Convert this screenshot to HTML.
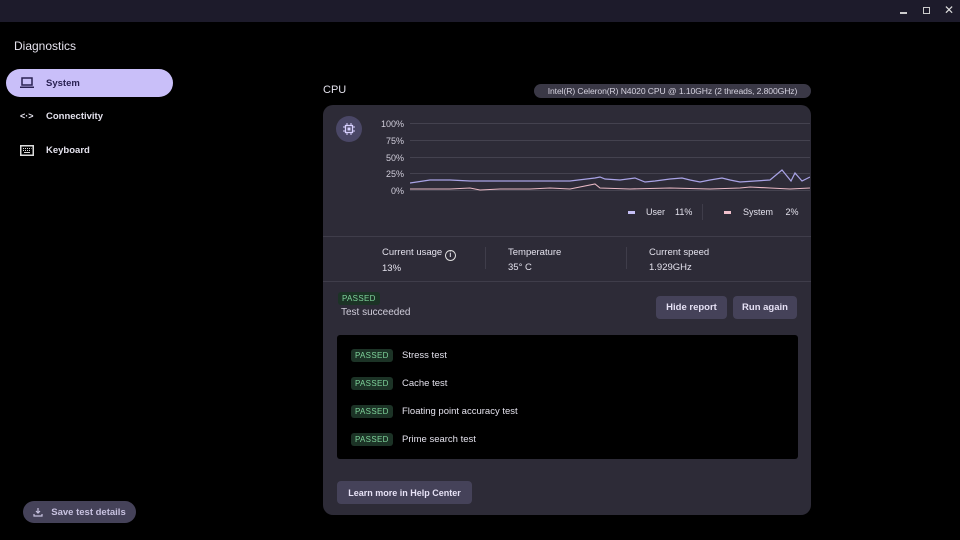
<!DOCTYPE html>
<html><head><style>
*{margin:0;padding:0;box-sizing:border-box}
body{width:960px;height:540px;background:#000;font-family:"Liberation Sans",sans-serif;color:#e3e1ec;position:relative;overflow:hidden;font-size:10px}
.a{position:absolute;white-space:nowrap}
.tb{left:0;top:0;width:960px;height:22px;background:#1d1b2b}
.nav{left:6px;width:167px;height:28px;border-radius:14px;display:flex;align-items:center;padding-left:14px;font-weight:bold;font-size:9.5px}
.nav svg{margin-right:12px}
.card{left:323px;top:105px;width:488px;height:410px;background:#2d2b37;border-radius:10px}
.btn{background:#454259;border-radius:4px;color:#e6e1f5;font-weight:bold;font-size:9.5px;display:flex;align-items:center;justify-content:center}
.pass{background:#1c3326;color:#7fd49b;font-size:8px;letter-spacing:.3px;padding:2px 4px;border-radius:3px}
.sep{background:#3f3d4a}
</style></head><body>
<div class="a tb"></div>
<div class="a" style="left:900px;top:12px;width:7px;height:2px;background:#ccc"></div>
<div class="a" style="left:923px;top:7px;width:7px;height:7px;border:1.5px solid #ccc"></div>
<div class="a" style="left:944px;top:3px;font-size:12px;color:#ddd">✕</div>
<div class="a" style="left:14px;top:39px;font-size:12px;color:#e6e3ee">Diagnostics</div>
<div class="a nav" style="top:69px;background:#c9bff9;color:#2a2253">
<svg width="14" height="12" viewBox="0 0 14 12"><rect x="2" y="1" width="10" height="7" fill="none" stroke="#2a2253" stroke-width="1.5"/><rect x="0" y="9.5" width="14" height="1.5" fill="#2a2253"/></svg>System</div>
<div class="a nav" style="top:102px;color:#e3e1ec">
<span style="width:14px;margin-right:12px;font-size:9px">&lt;·&gt;</span>Connectivity</div>
<div class="a nav" style="top:136px;color:#e3e1ec">
<svg width="14" height="11" viewBox="0 0 14 11"><rect x=".75" y=".75" width="12.5" height="9.5" fill="none" stroke="#ddd" stroke-width="1.5"/><path d="M3 3.5h1M5 3.5h1M7 3.5h1M9 3.5h1M11 3.5h0.5M3 5.5h1M5 5.5h1M7 5.5h1M9 5.5h1M4 7.5h6" stroke="#ddd" stroke-width="1"/></svg>Keyboard</div>
<div class="a btn" style="left:23px;top:501px;width:113px;height:22px;border-radius:11px;color:#c8c2e0">
<svg width="10" height="10" viewBox="0 0 10 10" style="margin-right:8px"><path d="M5 1v5M3 4l2 2 2-2M1 7v2h8V7" fill="none" stroke="#c8c2e0" stroke-width="1.2"/></svg>Save test details</div>

<div class="a" style="left:323px;top:84px;font-size:11px">CPU</div>
<div class="a" style="left:534px;top:84px;width:277px;height:14px;background:#3a3846;border-radius:7px;font-size:8.6px;color:#d6d3e0;text-align:center;line-height:14px;letter-spacing:-0.1px">Intel(R) Celeron(R) N4020 CPU @ 1.10GHz (2 threads, 2.800GHz)</div>
<div class="a card"></div>
<div class="a" style="left:336px;top:116px;width:26px;height:26px;border-radius:13px;background:#4a4766;display:flex;align-items:center;justify-content:center">
<svg width="12" height="12" viewBox="0 0 12 12"><rect x="2.5" y="2.5" width="7" height="7" fill="none" stroke="#d8d0ff" stroke-width="1.3"/><rect x="4.5" y="4.5" width="3" height="3" fill="#d8d0ff"/><path d="M4 0v2M8 0v2M4 10v2M8 10v2M0 4h2M0 8h2M10 4h2M10 8h2" stroke="#d8d0ff"/></svg></div>
<div class="a" style="left:372px;top:116px;width:32px;font-size:9px;color:#d0cdda;text-align:right;line-height:16.8px">100%<br>75%<br>50%<br>25%<br>0%</div>
<svg class="a" style="left:410px;top:120px" width="400" height="75" viewBox="0 0 400 75">
<g stroke="#44424f" stroke-width="1"><path d="M0 3.5h400M0 20.5h400M0 37.5h400M0 53.5h400M0 70.5h400"/></g>
<polyline fill="none" stroke="#a9a3e6" stroke-width="1.2" points="0,63 20,60 40,60 60,61 80,61 100,61 120,61 140,61 160,61 185,58 190,57 195,59 210,60 225,58 235,62 245,61 260,59 272,58 280,60 290,62 300,60 312,58 320,60 330,62 345,61 360,60 372,50 381,61 385,53 392,61 400,57"/>
<polyline fill="none" stroke="#e8b8c4" stroke-width="1.1" points="0,69 40,69 60,68 70,70 90,69 120,69 140,68 160,69 185,64 190,68 220,69 260,68 300,69 330,68 340,67 360,68 380,69 400,68"/>
</svg>
<div class="a" style="left:628px;top:211px;width:7px;height:3px;background:#c5bff5"></div>
<div class="a" style="left:646px;top:207px;font-size:9px">User&nbsp;&nbsp;&nbsp;&nbsp;11%</div>
<div class="a sep" style="left:702px;top:204px;width:1px;height:16px"></div>
<div class="a" style="left:724px;top:211px;width:7px;height:3px;background:#f0c0cc"></div>
<div class="a" style="left:743px;top:207px;font-size:9px">System&nbsp;&nbsp;&nbsp;&nbsp;&nbsp;2%</div>
<div class="a sep" style="left:323px;top:236px;width:488px;height:1px"></div>
<div class="a" style="left:382px;top:245px;font-size:9.5px;line-height:15px">Current usage <span style="display:inline-block;width:11px;height:11px;border:1.2px solid #ddd;border-radius:6px;font-size:7px;text-align:center;line-height:9px;vertical-align:-2px;font-weight:bold">i</span><br>13%</div>
<div class="a sep" style="left:485px;top:247px;width:1px;height:22px"></div>
<div class="a" style="left:508px;top:245px;font-size:9.5px;line-height:15px">Temperature<br>35° C</div>
<div class="a sep" style="left:626px;top:247px;width:1px;height:22px"></div>
<div class="a" style="left:649px;top:245px;font-size:9.5px;line-height:15px">Current speed<br>1.929GHz</div>
<div class="a sep" style="left:323px;top:281px;width:488px;height:1px"></div>
<div class="a pass" style="left:338px;top:292px">PASSED</div>
<div class="a" style="left:341px;top:307px;font-size:10px;color:#d0cdda">Test succeeded</div>
<div class="a btn" style="left:656px;top:296px;width:71px;height:23px">Hide report</div>
<div class="a btn" style="left:733px;top:296px;width:64px;height:23px">Run again</div>
<div class="a" style="left:337px;top:335px;width:461px;height:124px;background:#000;border-radius:3px"></div>
<div class="a pass" style="left:351px;top:349px">PASSED</div><div class="a" style="left:402px;top:350px;font-size:9.5px">Stress test</div>
<div class="a pass" style="left:351px;top:377px">PASSED</div><div class="a" style="left:402px;top:378px;font-size:9.5px">Cache test</div>
<div class="a pass" style="left:351px;top:405px">PASSED</div><div class="a" style="left:402px;top:406px;font-size:9.5px">Floating point accuracy test</div>
<div class="a pass" style="left:351px;top:433px">PASSED</div><div class="a" style="left:402px;top:434px;font-size:9.5px">Prime search test</div>
<div class="a btn" style="left:337px;top:481px;width:135px;height:23px;font-size:9px">Learn more in Help Center</div>
</body></html>
